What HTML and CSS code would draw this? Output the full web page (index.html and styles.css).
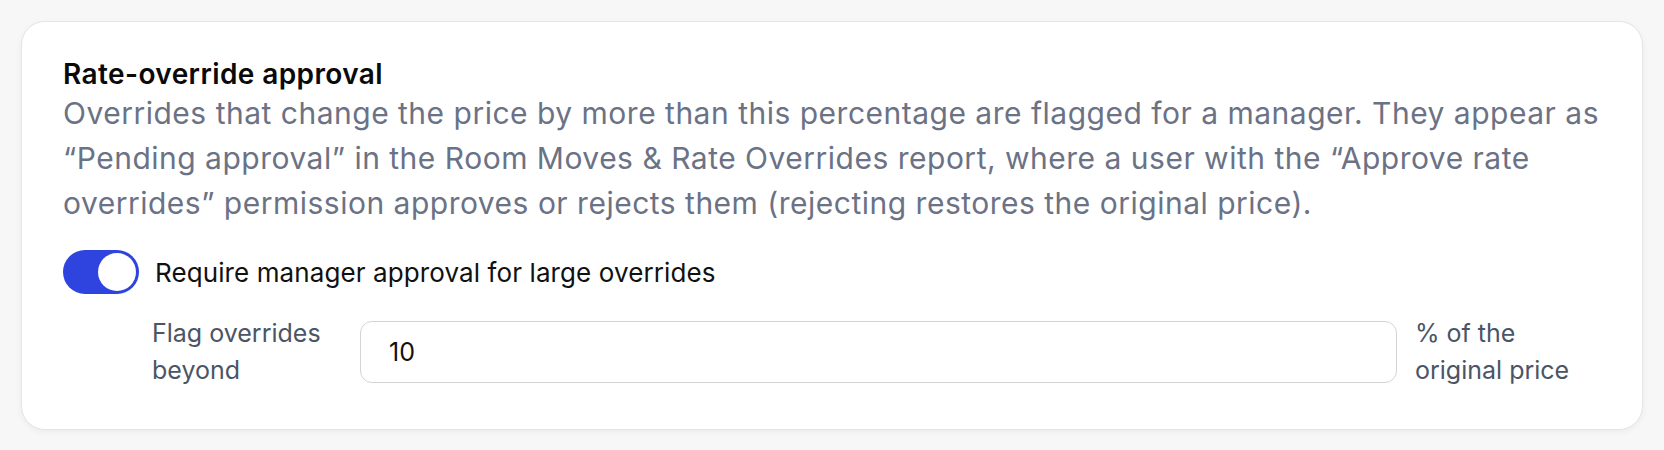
FILE: index.html
```html
<!DOCTYPE html>
<html lang="en">
<head>
    <meta charset="UTF-8">
    <meta name="viewport" content="width=device-width, initial-scale=1.0">
    <title>Rate-override approval</title>
    <link rel="stylesheet" href="styles.css">
</head>
<body>

    <div class="page">
        <section class="card">
            <h2 class="card-title">Rate-override approval</h2>
            <p class="card-desc">Overrides that change the price by more than this percentage are flagged for a manager. They appear as “Pending approval” in the Room Moves &amp; Rate Overrides report, where a user with the “Approve rate overrides” permission approves or rejects them (rejecting restores the original price).</p>

            <label class="toggle-row">
                <span class="switch is-on"><span class="switch-knob"></span></span>
                <span class="toggle-label">Require manager approval for large overrides</span>
            </label>

            <div class="threshold-row">
                <label class="field-label" for="threshold">Flag overrides beyond</label>
                <input id="threshold" class="field-input" type="text" value="10">
                <span class="field-suffix">% of the original price</span>
            </div>
        </section>
    </div>

</body>
</html>
```

FILE: styles.css
```css
/* Reset */
* {
    margin: 0;
    padding: 0;
    box-sizing: border-box;
}

body {
    font-family: Inter, 'Noto Sans', sans-serif;
    background: #f7f7f7;
    color: #111;
}

.page {
    padding: 21px;
}

/* Settings card */
.card {
    background: #fff;
    border: 1px solid #e5e5e5;
    border-radius: 24px;
    padding: 36px 41px 40px;
    box-shadow: 0 2px 6px rgba(0, 0, 0, 0.05);
}

.card-title {
    font-size: 28px;
    font-weight: 600;
    line-height: 32px;
    letter-spacing: 0.4px;
    color: #0a0a0a;
}

.card-desc {
    margin-top: 1px;
    font-size: 30px;
    line-height: 45px;
    letter-spacing: 0.5px;
    color: #6b7285;
}

/* Toggle */
.toggle-row {
    display: flex;
    align-items: center;
    gap: 16px;
    margin-top: 24px;
    cursor: pointer;
}

.switch {
    position: relative;
    flex: 0 0 76px;
    height: 44px;
    border-radius: 22px;
    background: #d4d4d8;
}

.switch.is-on {
    background: #2f44df;
}

.switch-knob {
    position: absolute;
    top: 3px;
    left: 3px;
    width: 38px;
    height: 38px;
    border-radius: 50%;
    background: #fff;
}

.switch.is-on .switch-knob {
    left: 35px;
}

.toggle-label {
    font-size: 26px;
    letter-spacing: 0.1px;
    color: #111;
}

/* Threshold input */
.threshold-row {
    display: flex;
    align-items: center;
    gap: 18px;
    margin-top: 21px;
    margin-left: 89px;
    padding-right: 24px;
}

.field-label,
.field-suffix {
    font-size: 25px;
    line-height: 37px;
    color: #4b5565;
}

.field-label {
    flex: 0 0 180px;
    margin-right: 10px;
}

.field-suffix {
    flex: 0 0 162px;
}

.field-input {
    flex: 1;
    height: 62px;
    padding: 0 28px;
    border: 1.5px solid #d4d4d8;
    border-radius: 12px;
    font-family: inherit;
    font-size: 25px;
    color: #111;
    outline: none;
}
```
